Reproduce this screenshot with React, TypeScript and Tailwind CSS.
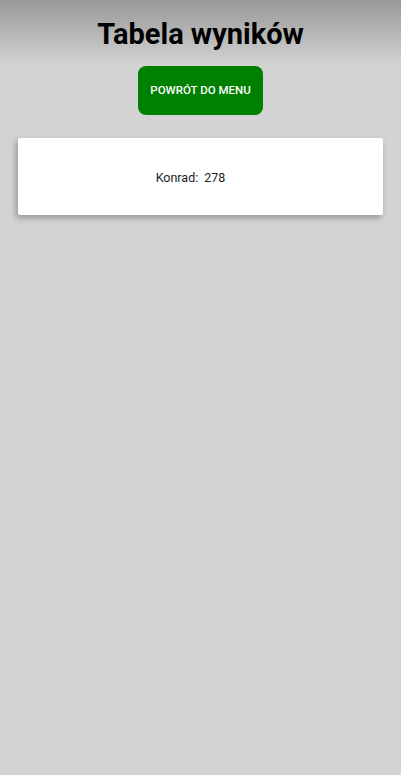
import React from 'react'

const scores = [{ name: 'Konrad', points: 278 }]

const App: React.FC = () => {
  return (
    <div className="min-h-[775px] bg-[#d3d3d3] font-['Roboto',sans-serif]">
      <div className="bg-gradient-to-b from-[#989898] to-[#d3d3d3] h-[66px] flex items-start justify-center pt-[16px]">
        <h1 className="text-[29px] leading-[37px] font-bold text-black">Tabela wyników</h1>
      </div>
      <div className="flex justify-center">
        <button className="w-[125px] h-[49px] bg-[#008000] rounded-[8px] text-white text-[11.5px] font-medium">
          POWRÓT DO MENU
        </button>
      </div>
      <div className="px-[18px] pt-[23px]">
        {scores.map((s) => (
          <div
            key={s.name}
            className="h-[77px] bg-white rounded-[2px] shadow-[-2px_3px_6px_rgba(0,0,0,0.3)] flex items-center justify-center pt-[3px] pr-[20px] text-[12.5px] text-[#222]"
          >
            <span>{s.name}:</span>
            <span className="ml-[6px]">{s.points}</span>
          </div>
        ))}
      </div>
    </div>
  )
}

export default App
